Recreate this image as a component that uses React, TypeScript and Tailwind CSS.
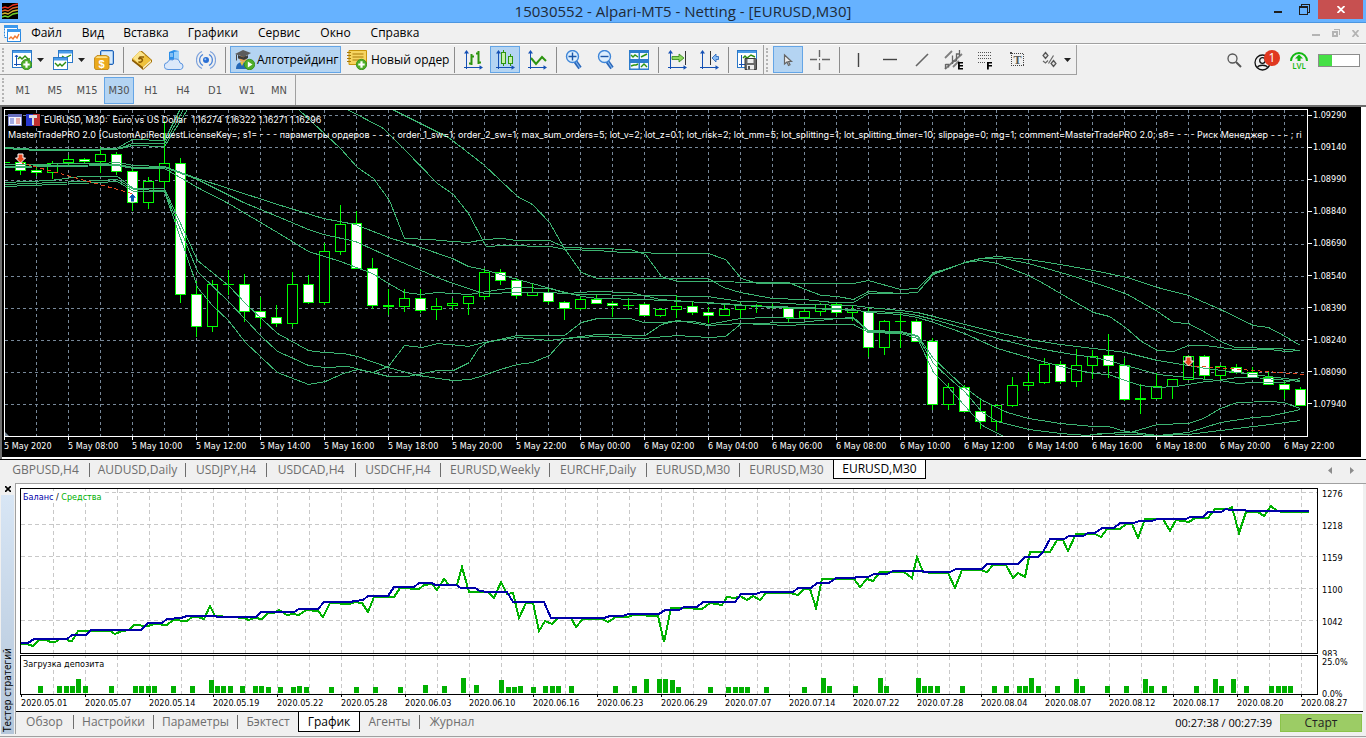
import { useState } from "react";
import type { ReactNode } from "react";

const TAHOMA = "font-['DejaVu_Sans_Condensed','DejaVu_Sans',sans-serif]";

/* ---------- DATA ---------- */

// high, body top, body bottom, low, bearish
const candles: number[][] = [
  [155, 162, 171, 175, 1], [168, 170, 173, 176, 1], [161, 163, 173, 179, 0], [155, 159, 163, 166, 0],
  [158, 159, 162, 164, 1], [147, 154, 162, 173, 0], [152, 154, 172, 175, 1], [168, 171, 203, 211, 1],
  [177, 181, 203, 209, 0], [121, 163, 182, 191, 0], [158, 163, 295, 303, 1], [281, 294, 327, 337, 1],
  [280, 284, 327, 332, 0], [270, 284, 285, 295, 0], [274, 284, 312, 322, 1], [297, 311, 318, 327, 1],
  [305, 317, 324, 327, 1], [272, 284, 324, 327, 0], [275, 284, 303, 304, 1], [243, 251, 303, 305, 0],
  [205, 224, 252, 255, 0], [211, 223, 269, 269, 1], [258, 268, 306, 309, 1], [289, 305, 307, 315, 0],
  [289, 298, 307, 312, 0], [289, 298, 311, 313, 1], [298, 306, 310, 320, 0], [298, 303, 306, 310, 0],
  [296, 296, 304, 315, 0], [268, 272, 297, 300, 0], [269, 272, 281, 285, 1], [278, 280, 296, 299, 1],
  [283, 292, 296, 296, 0], [287, 292, 302, 304, 1], [301, 302, 309, 320, 1], [297, 299, 309, 310, 0],
  [294, 299, 304, 304, 1], [301, 303, 306, 317, 1], [298, 305, 306, 310, 0], [303, 304, 316, 316, 1],
  [308, 309, 316, 317, 0], [295, 306, 310, 318, 0], [301, 306, 313, 315, 1], [307, 312, 316, 323, 1],
  [304, 309, 316, 316, 0], [303, 305, 310, 318, 0], [304, 305, 307, 313, 0], [304, 306, 308, 309, 0],
  [307, 308, 318, 323, 1], [308, 311, 318, 320, 0], [303, 304, 312, 316, 0], [303, 304, 313, 316, 1],
  [305, 310, 313, 321, 0], [307, 311, 348, 357, 1], [320, 321, 348, 355, 0], [313, 321, 322, 348, 0],
  [319, 321, 342, 342, 1], [338, 341, 405, 410, 1], [383, 387, 405, 410, 0], [385, 387, 412, 412, 1],
  [400, 411, 422, 429, 1], [404, 405, 422, 431, 0], [377, 385, 406, 407, 0], [372, 382, 386, 391, 0],
  [358, 364, 383, 384, 0], [361, 364, 382, 384, 1], [349, 365, 382, 387, 0], [350, 356, 366, 379, 0],
  [334, 355, 366, 378, 1], [358, 365, 400, 401, 1], [384, 398, 400, 414, 0], [373, 386, 399, 399, 0],
  [379, 379, 387, 399, 0], [355, 356, 380, 380, 0], [355, 356, 376, 379, 1], [365, 366, 376, 381, 0],
  [364, 367, 373, 374, 1], [367, 372, 378, 378, 1], [372, 377, 385, 385, 1], [380, 384, 390, 399, 1],
  [387, 389, 406, 406, 1],
];

const bands = [
  // upper
  "4,147 36,149 84,149 116,148 132,139 164,140 179,110",
  "4,148 36,150 84,150 116,149 132,143 164,143 183,109",
  "4,148 36,150 116,149 132,145 164,146 187,109",
  "298,109 340,148 357,167 373,178 389,200 404,238 430,239 452,241 468,242 484,239 502,238 516,240 549,240 565,247 597,248 630,249 645,254 661,276 677,281 788,282 805,289 821,295 837,296 853,299 868,291 900,293 917,292 933,273 965,262 980,260 997,263 1028,275 1043,283 1060,293 1077,303 1093,312 1109,316 1125,327 1141,341 1157,350 1173,351 1188,345 1205,345 1235,349 1270,349 1285,351 1300,350",
  "347,109 383,128 403,148 437,183 453,194 468,213 484,243 486,246 503,245 550,246 565,249 597,250 623,252 677,253 708,253 725,259 741,278 757,283 853,283 868,280 900,289 917,288 933,272 948,268 965,262 980,258 997,256 1028,259 1060,264 1093,270 1127,277 1157,287 1188,295 1220,309 1253,325 1268,327 1283,335 1300,345",
  "392,109 448,137 483,164 517,196 532,204 549,222 564,248 581,272 597,278 663,278 708,278 723,287 740,292 772,298 803,299 833,302 853,302 868,293 900,293 917,292 933,274 967,261 980,258 1003,258 1028,263 1060,272 1077,277 1108,287 1127,294 1157,311 1173,322 1188,323 1205,332 1220,341 1235,347 1277,348 1300,350",
  // middle
  "4,164 100,163 117,162 133,165 164,166 197,178 228,188 277,204 323,218 355,224 388,237 420,247 452,258 468,266 483,269 517,279 550,288 581,296 597,298 643,299 683,301 723,303 772,307 837,309 868,311 900,312 917,315 933,319 964,328 997,338 1028,346 1060,352 1093,357 1108,360 1125,365 1140,369 1157,374 1188,377 1217,380 1237,377 1253,377 1300,381",
  "4,166 117,164 133,167 164,167 197,179 243,202 277,216 308,229 323,234 355,241 388,256 437,277 450,282 468,288 480,292 486,293 517,292 550,292 577,294 643,295 707,296 740,301 772,302 803,304 853,305 868,307 900,310 917,312 933,316 964,324 997,332 1028,339 1060,344 1093,348 1125,352 1157,360 1188,365 1205,368 1237,372 1268,376 1300,380",
  "4,167 117,165 133,168 164,168 197,187 228,203 277,232 308,251 340,261 372,273 388,283 404,292 420,294 437,292 468,294 500,289 517,287 549,288 567,293 593,291 630,292 660,299 740,305 803,307 853,309 868,312 900,314 917,317 933,322 964,333 997,348 1028,357 1060,366 1093,373 1108,374 1125,380 1140,385 1157,387 1175,386 1188,384 1205,381 1220,380 1237,383 1253,382 1283,382 1300,378",
  // lower
  "4,182 50,180 80,176 117,176 133,188 164,188 197,260 228,285 247,305 277,333 308,350 323,352 343,353 357,356 388,367 413,374 437,378 453,380 470,379 483,375 500,369 517,364 532,362 549,355 564,338 597,336 643,338 677,335 708,337 725,336 741,323 800,322 837,318 853,317 868,330 900,331 917,335 933,358 948,372 964,387 982,400 1007,412 1028,418 1060,423 1093,426 1108,426 1125,431 1157,435 1188,432 1220,422 1253,417 1268,416 1300,409",
  "4,184 80,181 117,179 133,189 164,190 197,271 230,303 260,335 277,351 293,358 308,365 325,367 347,366 372,372 388,376 407,376 437,370 453,370 469,362 478,348 486,342 517,335 564,335 581,322 597,318 630,318 643,322 693,321 708,324 740,318 770,317 800,318 853,318 868,331 900,332 917,336 933,363 948,377 964,391 982,412 997,421 1028,429 1060,433 1087,435 1100,433 1157,435 1188,434 1220,430 1253,426 1270,424 1300,420",
  "4,186 80,183 117,181 133,191 164,191 197,287 212,305 228,320 245,342 277,372 308,384 325,381 343,373 357,369 372,372 388,366 404,345 422,347 437,343 460,345 468,346 483,342 517,337 549,340 597,334 645,335 661,324 677,320 708,325 740,323 788,325 803,324 853,324 868,332 900,333 917,338 933,372 948,387 964,405 982,425 1003,436",
  "1083,435 1120,432 1130,432 1157,424 1188,423 1203,418 1220,408 1237,402 1270,401 1283,402 1300,408",
];

const priceLevels = ["1.09290", "1.09140", "1.08990", "1.08840", "1.08690", "1.08540", "1.08390", "1.08240", "1.08090", "1.07940"];

const timeLabels = [
  "5 May 2020", "5 May 08:00", "5 May 10:00", "5 May 12:00", "5 May 14:00", "5 May 16:00", "5 May 18:00",
  "5 May 20:00", "5 May 22:00", "6 May 00:00", "6 May 02:00", "6 May 04:00", "6 May 06:00", "6 May 08:00",
  "6 May 10:00", "6 May 12:00", "6 May 14:00", "6 May 16:00", "6 May 18:00", "6 May 20:00", "6 May 22:00",
];

const balance =
  "21,643 28,643 34,639 67,639 72,635 86,635 91,630 141,630 148,623 162,623 167,619 181,618 187,616 215,616 218,617 256,617 261,612 294,612 299,609 318,609 324,602 349,602 363,600 368,596 388,596 394,587 414,587 419,583 432,583 435,585 456,585 461,588 475,588 480,591 488,592 507,592 513,602 544,602 551,618 604,618 610,616 623,616 628,614 659,614 665,610 679,610 684,607 697,607 703,602 735,602 741,594 756,594 761,592 793,592 798,588 811,588 817,583 829,583 836,578 854,578 857,577 868,577 874,574 887,574 893,571 922,571 925,572 950,572 956,569 982,569 987,564 1018,564 1025,557 1038,557 1043,552 1050,539 1064,539 1069,536 1083,536 1088,533 1095,533 1102,528 1114,528 1120,523 1133,523 1140,521 1152,521 1157,519 1186,519 1190,517 1203,517 1208,512 1221,512 1226,509 1230,510 1245,510 1247,511 1309,511";

const equity =
  "21,644 27,644 33,646 39,640 47,640 50,642 55,642 60,639 67,639 69,641 72,641 78,631 110,631 115,634 122,631 129,630 134,625 140,625 142,626 148,626 154,624 167,625 173,620 187,621 192,617 198,617 204,619 210,606 215,616 245,618 248,620 255,618 262,619 268,613 274,613 279,610 287,615 293,614 299,615 306,610 318,611 323,617 330,603 350,604 355,602 362,603 368,612 374,597 394,597 400,588 419,589 424,585 432,584 437,590 444,579 449,585 457,585 462,567 469,592 488,592 494,598 501,582 507,594 513,593 519,618 526,603 533,603 539,631 545,621 552,624 558,618 571,618 576,627 583,619 602,619 608,622 616,617 628,617 633,615 658,616 664,642 671,608 683,608 702,609 710,603 722,605 727,597 735,598 740,596 747,600 753,596 760,600 766,593 790,593 798,595 804,589 810,589 816,608 822,579 854,579 860,587 867,579 873,581 880,572 904,572 912,578 917,557 923,572 933,573 948,573 955,588 962,570 980,570 987,572 993,565 1006,565 1013,578 1018,573 1025,577 1030,552 1050,552 1057,540 1063,540 1068,551 1076,534 1095,534 1101,537 1107,529 1120,529 1126,524 1132,524 1138,538 1145,519 1163,519 1170,531 1176,520 1189,522 1195,518 1208,518 1215,509 1228,509 1232,507 1239,533 1246,512 1258,512 1264,516 1271,506 1277,511 1283,512 1309,512";

// x, height
const loadBars: number[][] = [
  [38, 7], [57, 7], [64, 7], [70, 7], [76, 14], [83, 7], [109, 7], [133, 7], [139, 7], [146, 7], [152, 7],
  [171, 7], [190, 7], [209, 13], [215, 7], [221, 7], [228, 7], [240, 7], [253, 7], [259, 7], [266, 6],
  [278, 6], [291, 6], [297, 7], [304, 6], [329, 6], [354, 6], [373, 6], [398, 6], [423, 8], [442, 7],
  [461, 15], [474, 8], [499, 13], [506, 6], [512, 6], [518, 7], [531, 6], [543, 7], [550, 7], [556, 7],
  [569, 7], [613, 7], [632, 7], [644, 14], [657, 14], [663, 14], [670, 13], [676, 6], [708, 6], [726, 6],
  [733, 6], [739, 6], [745, 6], [764, 6], [802, 6], [821, 15], [827, 7], [853, 7], [878, 15], [884, 7],
  [916, 15], [922, 7], [928, 7], [935, 7], [960, 7], [992, 7], [1004, 7], [1017, 7], [1023, 7], [1029, 15],
  [1036, 7], [1055, 7], [1074, 14], [1080, 7], [1105, 7], [1124, 7], [1143, 14], [1149, 7], [1162, 7],
  [1194, 7], [1213, 14], [1219, 7], [1231, 14], [1244, 7], [1269, 7], [1276, 7], [1282, 7], [1288, 7],
];

const testerDates = [
  "2020.05.01", "2020.05.07", "2020.05.14", "2020.05.19", "2020.05.22", "2020.05.28", "2020.06.03",
  "2020.06.10", "2020.06.16", "2020.06.23", "2020.06.29", "2020.07.07", "2020.07.14", "2020.07.22",
  "2020.07.28", "2020.08.04", "2020.08.07", "2020.08.12", "2020.08.17", "2020.08.20", "2020.08.27",
];

const chartTabs = [
  { name: "GBPUSD,H4", width: "w-[88px]" },
  { name: "AUDUSD,Daily", width: "w-24" },
  { name: "USDJPY,H4", width: "w-[81px]" },
  { name: "USDCAD,H4", width: "w-[89px]" },
  { name: "USDCHF,H4", width: "w-[85px]" },
  { name: "EURUSD,Weekly", width: "w-[109px]" },
  { name: "EURCHF,Daily", width: "w-[97px]" },
  { name: "EURUSD,M30", width: "w-[93px]" },
  { name: "EURUSD,M30", width: "w-[93px]" },
  { name: "EURUSD,M30", width: "w-[93px]" },
];

const testerTabs = [
  { name: "Обзор", width: "w-[58px]" },
  { name: "Настройки", width: "w-20" },
  { name: "Параметры", width: "w-[84px]" },
  { name: "Бэктест", width: "w-[60px]" },
  { name: "График", width: "w-[62px]" },
  { name: "Агенты", width: "w-[60px]" },
  { name: "Журнал", width: "w-[64px]" },
];

/* ---------- ICONS ---------- */

function Icon({ children, size = 20 }: { children: ReactNode; size?: number }) {
  return (
    <svg width={size} height={size} viewBox={`0 0 ${size} ${size}`} fill="none" className="shrink-0" aria-hidden="true">
      {children}
    </svg>
  );
}

function Plus() {
  return (
    <>
      <circle cx="14.500" cy="14.500" r="5.200" fill="#4fae2a" stroke="#2f8a14" strokeWidth="0.800" />
      <path d="M14.500 11.300v6.400M11.300 14.500h6.400" stroke="#fff" strokeWidth="2.200" />
    </>
  );
}

function Axes() {
  return (
    <>
      <path d="M3.500 3v16M1 17.500h17" stroke="#1450b4" strokeWidth="1" shapeRendering="crispEdges" />
      <path d="M3.500 0l2.500 3.500h-5zM20 17.500l-3.500 -2.200v4.400z" fill="#1450b4" />
    </>
  );
}

function CaretDown() {
  return (
    <svg width="7" height="4" viewBox="0 0 7 4" aria-hidden="true">
      <path d="M0 0h7L3.500 4z" fill="#222" />
    </svg>
  );
}

const newChartIcon = (
  <Icon>
    <rect x="0.500" y="0.500" width="19" height="17" fill="#fff" stroke="#2a78c8" />
    <rect x="1" y="1" width="18" height="2" fill="#4a9ce8" />
    <path d="M4.500 5v11M2 14.500h13M3 7l1.500-2L6 7" stroke="#1450b4" />
    <path d="M6 9l2-2 2 2 3-3 3 3 2 0" stroke="#2c8c10" strokeWidth="1.400" />
    <Plus />
  </Icon>
);

const profilesIcon = (
  <Icon>
    <rect x="5.500" y="0.500" width="14" height="12" fill="#fff" stroke="#2a78c8" />
    <rect x="6" y="1" width="13" height="2.500" fill="#4a9ce8" />
    <path d="M9 6l3 2 6-3" stroke="#2c8c10" strokeWidth="1.300" />
    <rect x="0.500" y="7.500" width="14" height="12" fill="#fff" stroke="#2a78c8" />
    <rect x="1" y="8" width="13" height="2.500" fill="#4a9ce8" />
    <path d="M2 13l3 3 2-2 2 2 4-4" stroke="#2c8c10" strokeWidth="1.400" />
  </Icon>
);

const marketIcon = (
  <Icon>
    <rect x="6.500" y="0.500" width="13" height="14" rx="1.500" fill="#9fc8f0" stroke="#1f62b8" />
    <rect x="8" y="2" width="10" height="11" fill="#d6e9fb" />
    <path d="M.5 8l2.500-2.500h9.500L15 7v11l-1 1.500H1.500L.5 18z" fill="#eba91c" stroke="#b9800e" strokeWidth="0.800" />
    <path d="M1.500 8l2-1.700h8.500l2 1.700z" fill="#fbe08a" />
    <text x="7.500" y="18" textAnchor="middle" fill="#fff" className="font-['Liberation_Sans',sans-serif] text-[11px] font-bold">$</text>
  </Icon>
);

const bookIcon = (
  <Icon>
    <path d="M0 9L8 1l2 0 10 9v2l-9 8z" fill="#a87408" />
    <path d="M0 9l8-8 11 9-8 7z" fill="#efc23c" />
    <path d="M1 8l7-7 5 4-7 8z" fill="#fbe48c" />
    <path d="M11 17l8-7v2l-8 7z" fill="#fff2c0" />
    <path d="M0 9l11 8.500v2L0 11z" fill="#8c5c04" />
    <path d="M12 7l-4 0-1.500 2c2-1 5-.500 3.500 2.200-1 1.500-3 1.300-3.500.300" stroke="#8c5c04" strokeWidth="1.500" />
  </Icon>
);

const vpsIcon = (
  <Icon>
    <path d="M5 2l5-2 5 1v11H5z" fill="#2c8fe8" />
    <path d="M10 2l5-1v11h-5z" fill="#9bd0fa" />
    <path d="M6 4h3M6 6h3" stroke="#d8eefe" />
    <path d="M4 19.500a3.500 3.500 0 01-.500-7 4 4 0 015-2.500 4.500 4.500 0 017.500 3 3.300 3.300 0 01.500 6.500z" fill="#dbe8fa" stroke="#5a94de" />
  </Icon>
);

const signalsIcon = (
  <Icon>
    <path d="M6 1.500a9.300 9.300 0 000 17M14 1.500a9.300 9.300 0 010 17" stroke="#7da2dc" strokeWidth="1.200" />
    <path d="M7 4.500a6.200 6.200 0 000 11M13 4.500a6.200 6.200 0 010 11" stroke="#4d86d8" strokeWidth="1.300" />
    <circle cx="10" cy="10" r="3" fill="#2a6fd4" />
    <circle cx="9.300" cy="9.300" r="1" fill="#9cc6fa" />
  </Icon>
);

const algoIcon = (
  <Icon>
    <path d="M1 19c0-5 3-7 6-7s6 2 6 7z" fill="#2468b8" />
    <path d="M5 12l2 4 2-4z" fill="#e8c040" />
    <circle cx="8" cy="8.500" r="3.600" fill="#e8a458" />
    <path d="M3.500 7l8-1v3c-3-2-5-1-8 0z" fill="#333" />
    <path d="M0 4l8-4 8 3-7 4z" fill="#5c5c5c" />
    <path d="M3 5l6 3 4-3v3l-4 2-6-2z" fill="#3c3c3c" />
    <path d="M1.500 4.500v6" stroke="#444" />
    <circle cx="14.500" cy="14.500" r="5.200" fill="#4fae2a" stroke="#2f8a14" strokeWidth="0.800" />
    <path d="M12.800 11.500l4.700 3-4.700 3z" fill="#fff" />
  </Icon>
);

const orderIcon = (
  <Icon>
    <path d="M2 .5h17.500v14H2z" fill="#f6d460" stroke="#c8960c" />
    <path d="M5.500 4h11M5.500 7h11M5.500 10h7" stroke="#a87808" />
    <path d="M0 2.500h4M0 5.500h4M0 8.500h4M0 11.500h4" stroke="#a87808" strokeWidth="1.200" />
    <Plus />
  </Icon>
);

const barsIcon = (
  <Icon>
    <Axes />
    <path d="M8.500 4v11M6 13.500h2.500M8.500 6.500h2.500M15.500 1v13M13 3.500h2.500M15.500 12.500h2.500" stroke="#2c9410" strokeWidth="2" />
  </Icon>
);

const candlesIcon = (
  <Icon>
    <Axes />
    <path d="M8.500 0v16M15.500 4v12" stroke="#2c9410" />
    <rect x="6.500" y="2.500" width="4" height="11" fill="#c5f0a8" stroke="#2c9410" />
    <rect x="13.500" y="6.500" width="4" height="7" fill="#c5f0a8" stroke="#2c9410" />
  </Icon>
);

const lineIcon = (
  <Icon>
    <Axes />
    <path d="M4 8l5 6 6-7 4 4" stroke="#2c9410" strokeWidth="2" />
  </Icon>
);

function Zoom({ plus = false }: { plus?: boolean }) {
  return (
    <Icon>
      <path d="M10 11l5 7" stroke="#2a66b8" strokeWidth="4" />
      <path d="M11 12l4 6" stroke="#7db4ee" strokeWidth="1.200" />
      <circle cx="7.500" cy="6.500" r="6" fill="#dceefd" stroke="#3f86d8" strokeWidth="1.400" />
      <path d={plus ? "M3.500 6.500h8M7.500 2.500v8" : "M3.500 6.500h8"} stroke="#1a56a8" strokeWidth="1.400" />
    </Icon>
  );
}

const tileIcon = (
  <Icon>
    <rect width="20" height="20" fill="#2c7ccc" />
    <path d="M1.500 3h8v6h-8zM11 3h8v6h-8zM1.500 13h8v5.500h-8zM11 13h8v5.500h-8z" fill="#f2f8ff" />
    <path d="M2 5l2 2 2-2 3 2M12 7l2-1 2-1 2-1M2 16l3-1 2 0 2-1M12 17l3-3 3 3" stroke="#2c9410" strokeWidth="1.400" />
  </Icon>
);

const autoScrollIcon = (
  <Icon>
    <Axes />
    <path d="M18.500 1v14" stroke="#333" shapeRendering="crispEdges" />
    <path d="M5 6.500h7V4l5 4-5 4V9.500H5z" fill="#8ed860" stroke="#2c8410" strokeWidth="0.800" />
  </Icon>
);

const shiftIcon = (
  <Icon>
    <Axes />
    <path d="M11.500 1v14" stroke="#333" shapeRendering="crispEdges" />
    <path d="M19.500 6.500h-2.500V4l-4 4 4 4V9.500h2.500z" fill="#8abcf4" stroke="#1f5fb8" strokeWidth="0.800" />
  </Icon>
);

const templateIcon = (
  <Icon>
    <rect x="0.500" y="0.500" width="19" height="17" fill="#fff" stroke="#2a78c8" />
    <rect x="1" y="1" width="18" height="2" fill="#4a9ce8" />
    <path d="M4.500 5v12M2 14.500h6" stroke="#1450b4" />
    <path d="M6 8l2-2 2 2 4-3 4 2" stroke="#2c8c10" strokeWidth="1.400" />
    <path d="M8 8.500h10.500l1 1v10H8z" fill="#6a6a6a" stroke="#3c3c3c" />
    <rect x="10.500" y="9" width="6" height="4" fill="#eee" />
    <rect x="10" y="15" width="7" height="4.500" fill="#eee" />
    <rect x="11" y="16" width="2" height="3.500" fill="#555" />
  </Icon>
);

const cursorIcon = (
  <Icon>
    <path d="M6.500 5v9l2.500-2 1.500 3.500 1.500-.700-1.500-3.300h3z" fill="#ececec" stroke="#666" strokeWidth="1.200" />
  </Icon>
);

const crosshairIcon = (
  <Icon>
    <path d="M9.500 0v7M9.500 13v7M0 9.500h7M12 9.500h8M9 9.500h1" stroke="#666" strokeWidth="1.400" />
  </Icon>
);

const channelIcon = (
  <Icon>
    <path d="M1 8L8 1M1 19L18 4M9 17l6-6" stroke="#808080" strokeWidth="1.800" />
    <path d="M1.500 19v-5M1.500 14.500h3v3M8.500 14V5.500M8.500 11h4M12.500 11V4h3M15.500 0v6" stroke="#666" strokeWidth="1.300" />
    <path d="M14 12h5v1.500h-3.200V15H19v1.500h-3.200V18H19v1.500h-5z" fill="#000" />
  </Icon>
);

const fiboIcon = (
  <Icon>
    <path d="M2 2.500h13M2 5.500h13M2 8.500h13M2 12.500h7" stroke="#555" strokeDasharray="1 1" shapeRendering="crispEdges" />
    <path d="M11 12h5v1.500h-3.200V15H16v1.500h-3.200v3H11z" fill="#000" />
  </Icon>
);

const textIcon = (
  <Icon>
    <rect x="3.500" y="3.500" width="12" height="12" stroke="#444" strokeDasharray="1 1" shapeRendering="crispEdges" />
    <rect x="2" y="2" width="2" height="2" fill="#444" />
    <text x="9.500" y="14" textAnchor="middle" fill="#555" className="font-['Liberation_Serif',serif] text-[12px] font-bold">T</text>
  </Icon>
);

const shapesIcon = (
  <Icon>
    <path d="M5.500 2.500l2.500 3-2.500 3-2.500-3zM13.500 10.500l2.500 3-2.500 3-2.500-3z" fill="#ddd" stroke="#555" strokeWidth="1.200" />
    <path d="M8.500 13.500l5-8M3 11l2.500 2 2.500-2.500" stroke="#666" strokeWidth="1.200" />
  </Icon>
);

/* ---------- PARTS ---------- */

function Tool({ label, active, children }: { label: string; active?: boolean; children: ReactNode }) {
  return (
    <button
      aria-label={label}
      className={`mx-px flex h-[27px] w-[30px] items-center justify-center border ${
        active ? "border-[#64a5e6] bg-[#b4d4f2]" : "border-transparent"
      }`}>
      {children}
    </button>
  );
}

function Separator() {
  return (
    <div className="flex h-[26px] w-1.5 justify-center">
      <div className="w-px bg-[#8c8c8c]" />
    </div>
  );
}

function Grip({ height }: { height: string }) {
  return <div className={`w-0 border-l-2 border-dotted border-[#b4b4b4] ${height}`} />;
}

function TitleBar() {
  return (
    <header className="flex h-[23px] items-center border-b border-[#4c96e0] bg-[#66b2ff] pl-0.5">
      <div className="w-[98px]">
        <svg width="16" height="16" viewBox="0 0 16 16" fill="none" aria-hidden="true">
          <rect width="16" height="16" fill="#000" />
          <path d="M0 5l3-1 3 1 5-3 5-1" stroke="#e83020" strokeWidth="1.400" />
          <path d="M0 8l3-1 3 1 5-3 5-1" stroke="#e06028" strokeWidth="1.400" />
          <path d="M0 11l3-1 3 1 5-3 5-1" stroke="#d0b030" strokeWidth="1.400" />
          <path d="M0 14l3-1 3 1 5-3 5-1" stroke="#70d028" strokeWidth="1.400" />
        </svg>
      </div>
      <h1 className="flex-1 text-center text-[15px] leading-5 text-[#1e2a38]">
        15030552 - Alpari-MT5 - Netting - [EURUSD,M30]
      </h1>
      <div className="flex self-start">
        <button aria-label="Свернуть" className="flex h-5 w-6 items-end justify-center pb-[7px]">
          <span className="h-0.5 w-2 bg-[#1e1e1e]" />
        </button>
        <button aria-label="Развернуть" className="flex h-[18px] w-7 items-center justify-center">
          <svg width="11" height="11" viewBox="0 0 11 11" fill="none" shapeRendering="crispEdges">
            <path d="M2.500 2V.5h8v8H9" stroke="#1e1e1e" />
            <path d="M.5 3v7.500h8V3" stroke="#1e1e1e" />
            <path d="M0 3h9" stroke="#1e1e1e" strokeWidth="2" />
          </svg>
        </button>
        <button aria-label="Закрыть" className="mr-[3px] flex h-[19px] w-[45px] items-center justify-center bg-[#c75050]">
          <svg width="8" height="7" viewBox="0 0 8 7">
            <path d="M.5 0l7 7M7.500 0l-7 7" stroke="#fff" strokeWidth="1.800" />
          </svg>
        </button>
      </div>
    </header>
  );
}

const menu = [
  { name: "Файл", width: "w-[51px]" },
  { name: "Вид", width: "w-[42px]" },
  { name: "Вставка", width: "w-16" },
  { name: "Графики", width: "w-[70px]" },
  { name: "Сервис", width: "w-[62px]" },
  { name: "Окно", width: "w-[51px]" },
  { name: "Справка", width: "w-[68px]" },
];

function MenuBar() {
  return (
    <nav className="flex h-[21px] items-center border-b border-[#a0a0a0] pl-1">
      <svg width="17" height="17" viewBox="0 0 17 17" fill="none" aria-hidden="true">
        <rect x="0.500" y="0.500" width="13" height="12" fill="#fff" stroke="#2a88e0" strokeDasharray="2 1" />
        <rect x="0" y="0" width="14" height="3" fill="#3c98ec" />
        <rect x="3.500" y="4.500" width="13" height="12" fill="#fff" stroke="#2a88e0" />
        <rect x="3" y="4" width="14" height="3" fill="#3c98ec" />
        <path d="M5 14l2-2 2 2 2-3 2 2 2-4" stroke="#f07830" strokeWidth="1.400" />
      </svg>
      <div className="flex flex-1 text-xs leading-4 text-black">
        {menu.map((item) => (
          <button key={item.name} className={`text-center ${item.width}`}>
            {item.name}
          </button>
        ))}
      </div>
      <div className="flex items-center gap-3 pr-[7px] text-[#b4b4b4]">
        <button aria-label="Свернуть окно" className="mt-1 h-0.5 w-2 bg-[#b4b4b4]" />
        <button aria-label="Восстановить окно">
          <svg width="8" height="8" viewBox="0 0 8 8" fill="none" shapeRendering="crispEdges">
            <path d="M2 .5h5.500V6" stroke="currentColor" />
            <rect x="1" y="3" width="4" height="4" stroke="currentColor" strokeWidth="2" />
          </svg>
        </button>
        <button aria-label="Закрыть окно">
          <svg width="7" height="7" viewBox="0 0 7 7">
            <path d="M.5 0l6 7M6.500 0l-6 7" stroke="currentColor" strokeWidth="1.800" />
          </svg>
        </button>
      </div>
    </nav>
  );
}

function Toolbar() {
  return (
    <div className="flex h-[31px] border-t border-white">
      <div className="flex items-center border-b border-[#a0a0a0] pl-0.5">
        <div className="w-1">
          <Grip height="h-6" />
        </div>
        <button aria-label="Новый график" className="flex w-[41px] items-center gap-[5px] pl-1.5">
          {newChartIcon}
          <CaretDown />
        </button>
        <button aria-label="Профили" className="flex w-[41px] items-center gap-[5px] pl-1.5">
          {profilesIcon}
          <CaretDown />
        </button>
        <Tool label="Маркет">{marketIcon}</Tool>
        <Separator />
        <Tool label="Библиотека">{bookIcon}</Tool>
        <Tool label="VPS">{vpsIcon}</Tool>
        <Tool label="Сигналы">{signalsIcon}</Tool>
        <Separator />
        <button className="ml-0.5 flex h-[27px] w-[111px] items-center gap-0.5 border border-[#64a5e6] bg-[#b4d4f2] pl-1 text-xs whitespace-nowrap">
          {algoIcon}
          Алготрейдинг
        </button>
        <button className="flex h-[27px] w-[110px] items-center gap-1 pl-1.5 text-xs whitespace-nowrap">
          {orderIcon}
          Новый ордер
        </button>
        <Separator />
        <Tool label="Бары">{barsIcon}</Tool>
        <Tool label="Свечи" active>{candlesIcon}</Tool>
        <Tool label="Линия">{lineIcon}</Tool>
        <Separator />
        <Tool label="Увеличить"><Zoom plus /></Tool>
        <Tool label="Уменьшить"><Zoom /></Tool>
        <Tool label="Мозаика">{tileIcon}</Tool>
        <Separator />
        <Tool label="Автопрокрутка">{autoScrollIcon}</Tool>
        <Tool label="Сдвиг графика">{shiftIcon}</Tool>
        <Separator />
        <Tool label="Шаблоны">{templateIcon}</Tool>
      </div>
      <div className="flex items-center border-r border-b border-l border-[#a0a0a0] pl-0.5">
        <div className="w-1.5">
          <Grip height="h-6" />
        </div>
        <Tool label="Курсор" active>{cursorIcon}</Tool>
        <Tool label="Перекрестие">{crosshairIcon}</Tool>
        <Separator />
        <Tool label="Вертикальная линия">
          <Icon><path d="M10.500 3v14" stroke="#444" strokeWidth="1.400" /></Icon>
        </Tool>
        <Tool label="Горизонтальная линия">
          <Icon><path d="M3 9.500h14" stroke="#444" strokeWidth="1.400" /></Icon>
        </Tool>
        <Tool label="Трендовая линия">
          <Icon><path d="M4 16L16 4" stroke="#666" strokeWidth="1.600" /></Icon>
        </Tool>
        <Tool label="Канал">{channelIcon}</Tool>
        <Tool label="Фибоначчи">{fiboIcon}</Tool>
        <Tool label="Текст">{textIcon}</Tool>
        <button aria-label="Фигуры" className="flex w-[42px] items-center gap-1 pl-1.5">
          {shapesIcon}
          <CaretDown />
        </button>
      </div>
      <div className="flex flex-1 items-center justify-end pr-1.5">
        <button aria-label="Поиск" className="mr-3">
          <svg width="15" height="15" viewBox="0 0 15 15" fill="none">
            <circle cx="5.500" cy="5.500" r="4.500" stroke="#555" strokeWidth="1.300" />
            <path d="M9 9l5 5" stroke="#555" strokeWidth="2" />
          </svg>
        </button>
        <button aria-label="Уведомления" className="relative mr-2 h-5 w-7">
          <svg width="17" height="17" viewBox="0 0 17 17" fill="none" className="mt-1">
            <circle cx="8.500" cy="8.500" r="7.500" stroke="#111" strokeWidth="1.300" />
            <circle cx="8.500" cy="6.500" r="2.800" stroke="#111" strokeWidth="1.300" />
            <path d="M3.500 13.500c1-3 9-3 10 0" stroke="#111" strokeWidth="1.300" />
          </svg>
          <span className="absolute top-0 right-0.5 flex size-4 items-center justify-center rounded-full bg-[#e03820] text-xs leading-4 text-white">
            1
          </span>
        </button>
        <button aria-label="Уровень" className="mr-2.5 flex w-[18px] flex-col items-center">
          <svg width="18" height="11" viewBox="0 0 18 11" fill="none">
            <path d="M1 10a8 8 0 0116 0" stroke="#12b812" strokeWidth="2" />
            <path d="M9 3.500l4 4h-2.500V10h-3V7.500H5z" fill="#12b812" />
          </svg>
          <span className="text-[8px] leading-2 font-semibold text-[#12b812]">LVL</span>
        </button>
        <div className="h-[13px] w-[42px] border border-[#8c8c8c] bg-white">
          <div className="h-full w-1/3 bg-[#46e046]" />
        </div>
      </div>
    </div>
  );
}

function Timeframes() {
  const [active, setActive] = useState("M30");

  return (
    <div className="flex h-[30px] pl-0.5">
      <div className="flex items-center border-r border-[#a0a0a0]">
        <div className="w-[5px]">
          <Grip height="h-6" />
        </div>
        {["M1", "M5", "M15", "M30", "H1", "H4", "D1", "W1", "MN"].map((item) => (
          <button
            key={item}
            onClick={() => setActive(item)}
            className={`mx-px h-[27px] w-[30px] border pt-0.5 text-[11px] text-[#505050] ${TAHOMA} ${
              item === active ? "border-[#64a5e6] bg-[#b4d4f2]" : "border-transparent"
            }`}>
            {item}
          </button>
        ))}
      </div>
    </div>
  );
}

function DealArrow({ x, y, up }: { x: number; y: number; up?: boolean }) {
  return (
    <path
      d={up ? "M0 -4.500l4.500 4.500h-2.500v4h-4v-4h-2.500z" : "M0 5l5 -5h-2.500v-4h-5v4h-2.500z"}
      transform={`translate(${x} ${y})`}
      fill={up ? "#0a5ab4" : "#e84820"}
      stroke="#fff"
      strokeWidth="1"
    />
  );
}

function PriceChart() {
  return (
    <section className={`border-t-2 border-l-2 border-[#6e6e6e] bg-white pr-[5px] pb-0.5 text-white ${TAHOMA}`}>
      <div className="bg-black pt-0.5 pb-1 pl-0.5">
        <div className="flex">
          <div className="relative h-[328px] min-w-0 flex-1">
            <svg viewBox="4 109 1304 328" preserveAspectRatio="none" className="block h-full w-full">
              <g stroke="#778899" strokeDasharray="3 3" shapeRendering="crispEdges">
                {Array.from({ length: 40 }, (_, i) => (
                  <line key={i} x1={36.5 + i * 32} x2={36.5 + i * 32} y1="110" y2="436" />
                ))}
                {[115, 147, 180, 212, 244, 276, 308, 340, 372, 404].map((y) => (
                  <line key={y} x1="5" x2="1307" y1={y + 0.5} y2={y + 0.5} />
                ))}
              </g>
              <g stroke="#00ff00" shapeRendering="crispEdges">
                {candles.map(([high, top, bottom, low, bear], i) => {
                  const x = 20 + i * 16;
                  return (
                    <g key={x}>
                      <line x1={x + 0.5} x2={x + 0.5} y1={high} y2={low} />
                      {bottom - top < 2 ? (
                        <line x1={x - 5} x2={x + 6} y1={top + 0.5} y2={top + 0.5} />
                      ) : (
                        <rect x={x - 4.5} y={top + 0.5} width="10" height={bottom - top - 1} fill={bear ? "#fff" : "#000"} />
                      )}
                    </g>
                  );
                })}
                <line x1="5" x2="10" y1="162.500" y2="162.500" />
              </g>
              <g stroke="#3cb371" fill="none" transform="translate(0.5 0.5)" shapeRendering="crispEdges">
                {bands.map((points) => (
                  <polyline key={points} points={points} />
                ))}
              </g>
              <path d="M20 162.500L132 193.500M1188 365.500L1306 374.500" stroke="#e84820" strokeDasharray="4 3" shapeRendering="crispEdges" />
              <DealArrow x={20.5} y={158} />
              <DealArrow x={132.5} y={198} up />
              <DealArrow x={1188.5} y={361} />
              <path d="M5 432v4h4z" fill="#778899" />
              <rect x="4.500" y="109.500" width="1303" height="327" fill="none" stroke="#fff" shapeRendering="crispEdges" />
            </svg>
            <div className="absolute inset-x-1 top-[3px] overflow-hidden font-[Inter,sans-serif] text-[9px] leading-[15px] whitespace-pre">
              <div className="flex items-center gap-1">
                <svg width="14" height="12" viewBox="0 0 14 12" fill="none">
                  <rect x="0.500" y="0.500" width="13" height="11" fill="#f4f4ff" stroke="#8890d0" />
                  <rect width="14" height="3" fill="#6a70c0" />
                  <path d="M2 5h4M2 7h4M2 9h4" stroke="#5060c8" />
                  <path d="M8 5h4M8 7h4M8 9h4" stroke="#d86050" />
                </svg>
                <svg width="14" height="12" viewBox="0 0 14 12">
                  <rect width="7" height="12" fill="#2838d0" />
                  <rect x="7" width="7" height="12" fill="#c03030" />
                  <path d="M3 1h8v3H3zM6 4h2v7H6z" fill="#ddd" />
                </svg>
                <span>EURUSD, M30:  Euro vs US Dollar  1.16274 1.16322 1.16271 1.16296</span>
              </div>
              <div>
                MasterTradePRO 2.0 [CustomApiRequestLicenseKey=; s1= - - - параметры ордеров - - - ; order_1_sw=1; order_2_sw=1; max_sum_orders=5; lot_v=2; lot_z=0.1; lot_risk=2; lot_mm=5; lot_splitting=1; lot_splitting_timer=10; slippage=0; mg=1; comment=MasterTradePRO 2.0; s8= - - - Риск Менеджер - - - ; ri
              </div>
            </div>
          </div>
          <div className="flex h-[301px] w-[53px] flex-col justify-between">
            {priceLevels.map((price) => (
              <div key={price} className="flex items-center gap-px text-[9px] leading-3">
                <span className="h-px w-1 bg-white" />
                {price}
              </div>
            ))}
          </div>
        </div>
        <div className="flex h-4">
          {timeLabels.map((label) => (
            <div key={label} className="w-16 shrink-0 text-[9px] leading-3 whitespace-nowrap">
              <div className="h-[3px] w-px bg-white" />
              {label}
            </div>
          ))}
        </div>
      </div>
    </section>
  );
}

function ChartTabs() {
  const [active, setActive] = useState(9);

  return (
    <div className="flex h-[21px] border-t border-black bg-[#f0f0f0] pl-0.5 text-xs leading-4 text-[#6e6e6e]">
      {chartTabs.map((tab, i) => (
        <button
          key={i}
          onClick={() => setActive(i)}
          className={`flex h-[19px] items-center justify-center whitespace-nowrap ${tab.width} ${
            i === active ? "border-r border-b border-l border-black bg-white text-black" : ""
          }`}>
          <span className="flex-1">{tab.name}</span>
          {i !== active && i + 1 !== active && <span className="h-3.5 w-px bg-[#6e6e6e]" />}
        </button>
      ))}
      <div className="flex flex-1 items-center justify-end gap-[18px] pr-3">
        <button aria-label="Назад">
          <svg width="4" height="7" viewBox="0 0 4 7"><path d="M4 0v7L0 3.500z" fill="#8c8c8c" /></svg>
        </button>
        <button aria-label="Вперёд">
          <svg width="4" height="7" viewBox="0 0 4 7"><path d="M0 0v7l4-3.500z" fill="#8c8c8c" /></svg>
        </button>
      </div>
    </div>
  );
}

function TesterPlots() {
  return (
    <div className={`bg-white pt-1 pr-1.5 pl-1 text-[9px] leading-3 text-black ${TAHOMA}`}>
      <div className="flex">
        <div className="min-w-0 flex-1">
          <div className="relative h-[166px]">
            <svg viewBox="20 488 1298 166" preserveAspectRatio="none" className="block h-full w-full">
              <g stroke="#c8c8c8" strokeDasharray="4 3" shapeRendering="crispEdges">
                {Array.from({ length: 40 }, (_, i) => (
                  <line key={i} x1={53.5 + i * 32} x2={53.5 + i * 32} y1="489" y2="653" />
                ))}
                {[492, 524, 556, 588, 620].map((y) => (
                  <line key={y} x1="21" x2="1317" y1={y + 0.5} y2={y + 0.5} />
                ))}
              </g>
              <polyline points={equity} fill="none" stroke="#00b000" strokeWidth="2" shapeRendering="crispEdges" />
              <polyline points={balance} fill="none" stroke="#0000a8" strokeWidth="2" shapeRendering="crispEdges" />
              <rect x="20.500" y="488.500" width="1297" height="165" fill="none" stroke="#000" shapeRendering="crispEdges" />
            </svg>
            <div className="absolute top-[3px] left-px bg-white px-0.5">
              <span className="text-[#0000a8]">Баланс</span> / <span className="text-[#00b000]">Средства</span>
            </div>
          </div>
          <div className="relative mt-px h-10">
            <svg viewBox="20 655 1298 40" preserveAspectRatio="none" className="block h-full w-full">
              <g stroke="#c8c8c8" strokeDasharray="4 3" shapeRendering="crispEdges">
                {Array.from({ length: 40 }, (_, i) => (
                  <line key={i} x1={53.5 + i * 32} x2={53.5 + i * 32} y1="656" y2="694" />
                ))}
              </g>
              {loadBars.map(([x, h]) => (
                <rect key={x} x={x} y={693 - h} width="5" height={h} fill="#00b000" shapeRendering="crispEdges" />
              ))}
              <rect x="20.500" y="655.500" width="1297" height="39" fill="none" stroke="#000" shapeRendering="crispEdges" />
            </svg>
            <div className="absolute top-[3px] left-px bg-white px-0.5">Загрузка депозита</div>
          </div>
        </div>
        <div className="flex h-[207px] w-[39px] flex-col pl-1">
          <div className="flex h-[168px] shrink-0 flex-col gap-5 overflow-hidden">
            {["1276", "1218", "1159", "1100", "1042", "983"].map((value) => (
              <span key={value} className="shrink-0">{value}</span>
            ))}
          </div>
          <span>25.0%</span>
          <span className="mt-5">0.0%</span>
        </div>
      </div>
      <div className="flex h-4 pl-px">
        {testerDates.map((date) => (
          <div key={date} className="w-16 shrink-0 leading-3">
            <div className="h-0.5 w-px bg-black" />
            {date}
          </div>
        ))}
      </div>
    </div>
  );
}

function Tester() {
  const [active, setActive] = useState("График");

  return (
    <section className="flex border-b border-[#a0a0a0] pt-[3px] pb-0.5">
      <aside className="flex w-[15px] flex-col items-center">
        <button aria-label="Закрыть панель" className="flex h-3 items-center">
          <svg width="6" height="6" viewBox="0 0 6 6"><path d="M0 0l6 6M6 0L0 6" stroke="#000" strokeWidth="1.600" /></svg>
        </button>
        <div className="flex w-[13px] flex-1 rotate-180 items-center justify-start bg-linear-to-b from-[#b4c6da] to-[#d8e6f5] pt-0.5 [writing-mode:vertical-rl]">
          <span className={`text-[10px] leading-[13px] ${TAHOMA}`}>Тестер стратегий</span>
        </div>
      </aside>
      <div className="min-w-0 flex-1 border-t border-l border-[#a0a0a0] pr-[3px]">
        <TesterPlots />
        <div className="flex h-[23px] border-t border-black text-xs leading-4 text-[#6e6e6e]">
          {testerTabs.map((tab) => (
            <button
              key={tab.name}
              onClick={() => setActive(tab.name)}
              className={`flex h-5 items-center whitespace-nowrap ${tab.width} ${
                tab.name === active ? "border-r border-b border-l border-black bg-white text-black" : ""
              }`}>
              <span className="flex-1">{tab.name}</span>
              {tab.name !== active && tab.name !== "Бэктест" && tab.name !== "Журнал" && (
                <span className="h-3.5 w-px bg-[#6e6e6e]" />
              )}
            </button>
          ))}
          <div className="flex flex-1 items-center justify-end gap-2 pr-px text-black">
            <span className="text-[11px]">00:27:38 / 00:27:39</span>
            <button className="h-[18px] w-[82px] border border-[#8bc34a] bg-[#9ccc65] text-[#222]">Старт</button>
          </div>
        </div>
      </div>
    </section>
  );
}

export default function App() {
  return (
    <main className="flex min-h-screen flex-col overflow-hidden bg-[#f0f0f0] font-['Open_Sans','Noto_Sans',sans-serif] text-black">
      <TitleBar />
      <MenuBar />
      <Toolbar />
      <Timeframes />
      <PriceChart />
      <ChartTabs />
      <Tester />
    </main>
  );
}
